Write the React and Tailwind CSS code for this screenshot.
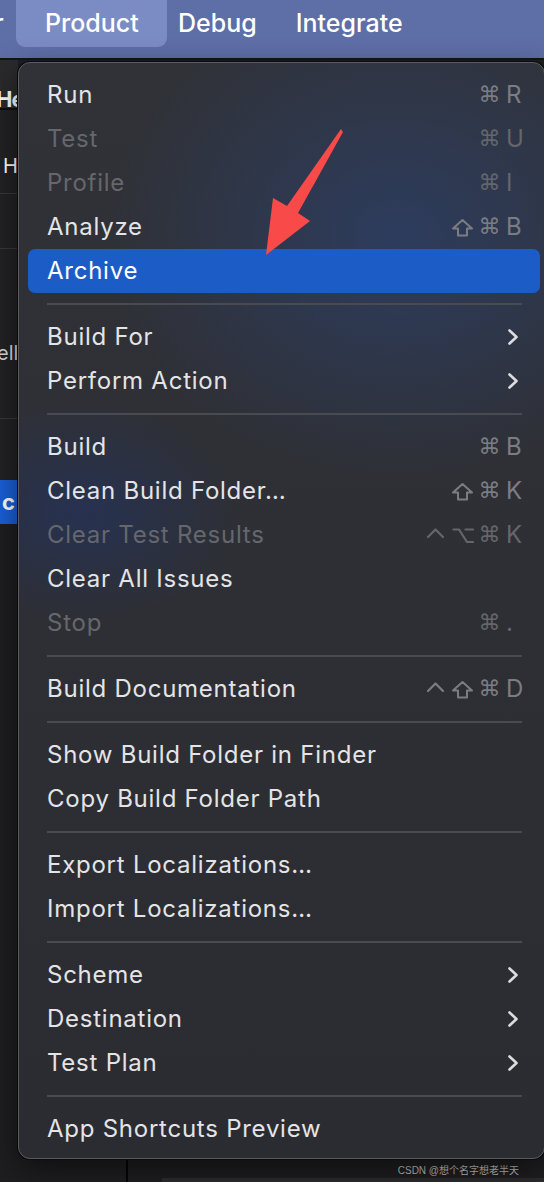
import React from "react";

const SEP = { sep: true };
const items = [
  { label: "Run", mods: ["cmd"], k: "R" },
  { label: "Test", mods: ["cmd"], k: "U", disabled: true },
  { label: "Profile", mods: ["cmd"], k: "I", disabled: true },
  { label: "Analyze", mods: ["shift", "cmd"], k: "B" },
  { label: "Archive", active: true },
  SEP,
  { label: "Build For", sub: true },
  { label: "Perform Action", sub: true },
  SEP,
  { label: "Build", mods: ["cmd"], k: "B" },
  { label: "Clean Build Folder…", mods: ["shift", "cmd"], k: "K" },
  { label: "Clear Test Results", mods: ["ctrl", "opt", "cmd"], k: "K", disabled: true },
  { label: "Clear All Issues" },
  { label: "Stop", mods: ["cmd"], k: ".", disabled: true },
  SEP,
  { label: "Build Documentation", mods: ["ctrl", "shift", "cmd"], k: "D" },
  SEP,
  { label: "Show Build Folder in Finder" },
  { label: "Copy Build Folder Path" },
  SEP,
  { label: "Export Localizations…" },
  { label: "Import Localizations…" },
  SEP,
  { label: "Scheme", sub: true },
  { label: "Destination", sub: true },
  { label: "Test Plan", sub: true },
  SEP,
  { label: "App Shortcuts Preview" },
];

function Chevron() {
  return (
    <svg width="12" height="18" viewBox="0 0 12 18" className="mr-[5px]">
      <path d="M2.5 2.5 L9.5 9 L2.5 15.5" fill="none" stroke="#dcdcde" strokeWidth="2.6" strokeLinecap="round" strokeLinejoin="round" />
    </svg>
  );
}

function Mod({ m }) {
  if (m === "shift") {
    return (
      <svg width="23" height="19" viewBox="0 0 23 19">
        <path d="M11.5 2 L21 10.5 L16 10.5 L16 17.5 L7 17.5 L7 10.5 L2 10.5 Z" fill="none" stroke="currentColor" strokeWidth="2" strokeLinejoin="round" />
      </svg>
    );
  }
  if (m === "ctrl") {
    return (
      <svg width="19" height="19" viewBox="0 0 19 19">
        <path d="M2 11 L9.5 3.5 L17 11" fill="none" stroke="currentColor" strokeWidth="2.2" strokeLinecap="round" strokeLinejoin="round" />
      </svg>
    );
  }
  if (m === "opt") {
    return (
      <svg width="22" height="19" viewBox="0 0 22 19">
        <path d="M1.5 3.5 L7 3.5 L15 16 L21 16 M13.5 3.5 L21 3.5" fill="none" stroke="currentColor" strokeWidth="2.2" strokeLinecap="round" strokeLinejoin="round" />
      </svg>
    );
  }
  return <span className="font-['DejaVu_Sans',sans-serif] text-[22px] leading-none">⌘</span>;
}

function Row({ it }) {
  const textColor = it.active ? "text-white" : it.disabled ? "text-[#65676c]" : "text-[#e4e4e6]";
  const scColor = it.disabled ? "text-[#64666b]" : "text-[#7b7d83]";
  return (
    <div
      className={
        "ml-[9px] mr-[4px] h-[44px] flex items-center pl-[19px] pr-[16px] rounded-[7px] " +
        (it.active ? "bg-[#1c5cc7]" : "")
      }
    >
      <span className={"flex-1 text-[24px] leading-none tracking-[0.75px] " + textColor}>{it.label}</span>
      {it.mods && (
        <span className={"flex items-center leading-none " + scColor}>
          {it.mods.map((m, i) => (
            <span key={i} className="w-[27px] flex justify-center items-center">
              <Mod m={m} />
            </span>
          ))}
          <span className="w-[21px] pl-[3px] text-[24px] font-['Inter',sans-serif]">{it.k}</span>
        </span>
      )}
      {it.sub && <Chevron />}
    </div>
  );
}

export default function App() {
  return (
    <div className="relative w-[544px] h-[1182px] overflow-hidden bg-[#1e1e20] font-['Inter','Noto_Sans_CJK_SC',sans-serif]">
      {/* top menu bar */}
      <div className="h-[60px] bg-[#5e6ea6] flex items-start text-white text-[25px] font-medium border-b-[2px] border-[#141416]">
        <span className="h-[47px] flex items-center ml-[-6px] w-[12px] overflow-hidden">r</span>
        <div className="ml-[10px] h-[47px] w-[151px] rounded-b-[9px] bg-[#7b8bc4] flex items-center pl-[29px]">
          Product
        </div>
        <span className="h-[47px] flex items-center ml-[11px]">Debug</span>
        <span className="h-[47px] flex items-center ml-[39px]">Integrate</span>
      </div>

      {/* background window strip */}
      <div className="flex flex-col w-[18px] text-white">
        <div className="h-[48px] bg-[#2a2a2c] pt-[28px] text-[22px] font-bold overflow-hidden whitespace-nowrap">
          <div className="leading-none ml-[-4px] tracking-[-1px]">He</div>
        </div>
        <div className="h-[2px] bg-[#0e0e0f]" />
        <div className="h-[83px] bg-[#222224] pt-[46px] text-[20px] pl-[3px] overflow-hidden">
          <div className="leading-none">H</div>
        </div>
        <div className="h-[1px] bg-[#38383a]" />
        <div className="h-[54px] bg-[#222224]" />
        <div className="h-[1px] bg-[#38383a]" />
        <div className="h-[169px] bg-[#222224] pt-[94px] overflow-hidden text-[20px] text-[#d8d8d8] whitespace-nowrap">
          <div className="leading-none ml-[-3px]">ello</div>
        </div>
        <div className="h-[1px] bg-[#38383a]" />
        <div className="h-[61px] bg-[#222224]" />
        <div className="h-[44px] bg-[#1a5fd6] flex items-center pl-[2px] text-[22px] font-bold">c</div>
        <div className="flex-1" />
      </div>

      {/* bottom background details */}
      <div className="absolute left-[126px] top-[1158px] w-[2px] h-[24px] bg-[#050505]" />
      <div className="absolute left-[162px] top-[1178px] right-0 h-[4px] bg-[#2c2c2e]" />
      <div className="absolute right-[25px] top-[1163px] text-[10px] text-[#bdbdbd] font-['Liberation_Sans','Noto_Sans_CJK_SC',sans-serif]">
        CSDN @想个名字想老半天
      </div>

      {/* dropdown menu */}
      <div className="absolute left-[18px] top-[62px] w-[527px] rounded-[12px] border border-[#5a5c62] shadow-[0_0_0_1px_#0a0a0b,0_10px_30px_rgba(0,0,0,0.5)] bg-[#2c2e34] bg-[image:radial-gradient(ellipse_55%_22%_at_72%_16%,rgba(44,68,120,0.6),transparent),radial-gradient(ellipse_30%_10%_at_12%_41%,rgba(30,52,115,0.45),transparent),linear-gradient(180deg,#303238,#2b2c31)] pt-[10px] pb-[7px]">
        {items.map((it, i) =>
          it.sep ? (
            <div key={i} className="h-[22px] flex items-center">
              <div className="ml-[28px] mr-[22px] flex-1 h-[2px] bg-[#494b51]" />
            </div>
          ) : (
            <Row key={i} it={it} />
          )
        )}
      </div>

      {/* red annotation arrow */}
      <svg className="absolute left-0 top-0 pointer-events-none" width="544" height="1182">
        <polygon points="341,129 343,132 298,213 310,221 266,255 273,198 287,206" fill="#f94a4a" />
      </svg>
    </div>
  );
}
